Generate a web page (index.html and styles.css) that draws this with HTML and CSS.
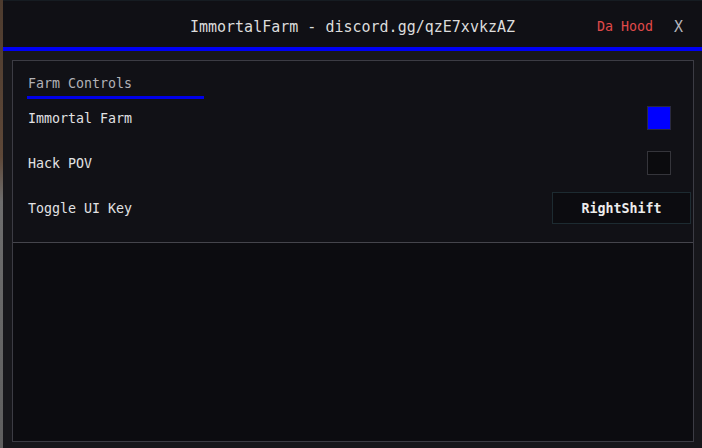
FILE: index.html
```html
<!DOCTYPE html>
<html>
<head>
<meta charset="utf-8">
<link rel="stylesheet" href="styles.css">
</head>
<body>
<div class="desk">
  <div class="edge"></div>
  <div class="window">
    <header class="titlebar">
      <div class="tb-left"></div>
      <div class="tb-title">ImmortalFarm - discord.gg/qzE7xvkzAZ</div>
      <div class="tb-right">
        <span class="game">Da Hood</span>
        <span class="close">X</span>
      </div>
    </header>
    <div class="accent"></div>
    <div class="content">
      <div class="frame">
        <section class="section">
          <div class="sec-head">Farm Controls</div>
          <div class="sec-line"></div>
          <div class="row">
            <span class="label">Immortal Farm</span>
            <span class="check on"></span>
          </div>
          <div class="row">
            <span class="label">Hack POV</span>
            <span class="check"></span>
          </div>
          <div class="row">
            <span class="label">Toggle UI Key</span>
            <span class="keybtn">RightShift</span>
          </div>
        </section>
        <div class="empty"></div>
      </div>
    </div>
  </div>
</div>
</body>
</html>
```
FILE: styles.css
```css
html, body {
  margin: 0;
  padding: 0;
  width: 702px;
  height: 448px;
  overflow: hidden;
  background: #17171b;
  font-family: "DejaVu Sans Mono", "Liberation Mono", monospace;
}
.desk {
  display: flex;
  width: 702px;
  height: 448px;
}
.edge {
  width: 3px;
  flex: none;
  background: linear-gradient(#4d3b2e 0%, #5e4838 35%, #6e6e6e 45%, #5f5f5f 100%);
}
.window {
  flex: 1;
  display: flex;
  flex-direction: column;
  background: #17171b;
}
.titlebar {
  height: 47px;
  flex: none;
  display: grid;
  grid-template-columns: 1fr auto 1fr;
  align-items: center;
  padding-top: 5px;
  background: #101015;
  border-top: 1px solid #161c22;
  box-sizing: border-box;
}
.tb-title {
  color: #dcdcdc;
  font-size: 15px;
  line-height: 18px;
}
.tb-right {
  display: flex;
  justify-content: flex-end;
  align-items: center;
  padding-right: 19px;
}
.game {
  color: #e04a4a;
  font-size: 13.3px;
  margin-right: 21px;
}
.close {
  color: #b4b4bc;
  font-size: 15px;
}
.accent {
  height: 4px;
  flex: none;
  background: #0000f5;
}
.content {
  flex: 1;
  padding: 9px 8px 6px 9px;
  display: flex;
}
.frame {
  flex: 1;
  display: flex;
  flex-direction: column;
  border: 1px solid #3c3c44;
  background: #0c0c10;
}
.section {
  background: #111116;
  border-bottom: 1px solid #45454c;
  padding: 15px 1px 17px 14px;
  height: 182px;
  box-sizing: border-box;
  display: flex;
  flex-direction: column;
}
.sec-head {
  color: #b2b2b6;
  font-size: 13.3px;
  line-height: 16px;
  padding-left: 1px;
}
.sec-line {
  width: 177px;
  height: 3px;
  margin-top: 4px;
  background: #0000e8;
}
.row {
  height: 32px;
  margin-top: 13px;
  display: flex;
  align-items: center;
  justify-content: space-between;
  padding-left: 1px;
}
.sec-line + .row { margin-top: 3px; }
.label {
  color: #e2e2e4;
  font-size: 13.3px;
  line-height: 16px;
  padding-top: 2px;
}
.check {
  width: 24px;
  height: 24px;
  box-sizing: border-box;
  border: 1px solid #35353b;
  background: #0b0b0e;
  margin-right: 21px;
}
.check.on {
  background: #0000ff;
  border-color: #2a2a40;
}
.keybtn {
  width: 139px;
  height: 32px;
  box-sizing: border-box;
  border: 1px solid #1d2b31;
  background: #0c0c10;
  color: #ececec;
  font-size: 13.3px;
  font-weight: bold;
  display: flex;
  align-items: center;
  justify-content: center;
  margin-right: 1px;
}
.empty {
  flex: 1;
}
```
